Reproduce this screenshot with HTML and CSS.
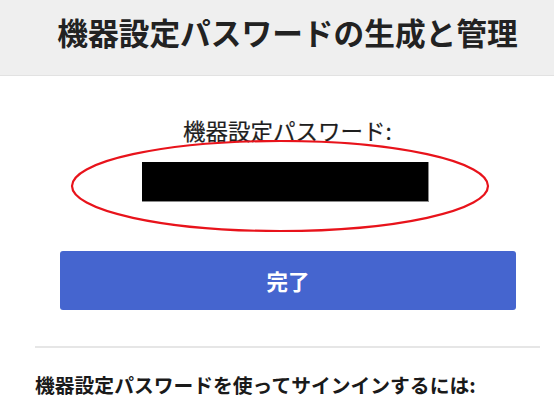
FILE: index.html
```html
<!DOCTYPE html>
<html lang="ja">
<head>
<meta charset="utf-8">
<title>機器設定パスワードの生成と管理</title>
<link rel="stylesheet" href="styles.css">
</head>
<body>
<header class="top">
  <h1 class="title">機器設定パスワードの生成と管理</h1>
</header>
<main class="content">
  <section class="result">
    <p class="label">機器設定パスワード:</p>
    <div class="secret-wrap">
      <div class="secret"></div>
      <svg class="mark" width="420" height="94" viewBox="0 0 420 94" aria-hidden="true">
        <ellipse cx="210" cy="46" rx="208" ry="45" fill="none" stroke="#e8131b" stroke-width="2.2"/>
      </svg>
    </div>
    <button class="done" type="button">完了</button>
  </section>
  <hr class="divider">
  <h2 class="howto">機器設定パスワードを使ってサインインするには:</h2>
</main>
</body>
</html>
```
FILE: styles.css
```css
* { box-sizing: border-box; }
html, body {
  margin: 0;
  padding: 0;
  background: #ffffff;
  font-family: "Noto Sans CJK JP", "Noto Sans", sans-serif;
  color: #222222;
}
.top {
  height: 76px;
  background: #efefef;
  border-bottom: 1px solid #e2e2e2;
  padding: 16px 14px 0 35px;
}
.title {
  margin: 0;
  font-size: 30.7px;
  line-height: 31px;
  font-weight: 700;
  text-align: center;
  color: #222222;
  white-space: nowrap;
}
.content {
  padding: 0 14px 0 35px;
}
.result {
  display: flex;
  flex-direction: column;
}
.label {
  margin: 43px 0 0 0;
  font-size: 22.5px;
  line-height: 23px;
  font-weight: 400;
  text-align: center;
  color: #1e1e1e;
  -webkit-text-stroke: 0.2px #1e1e1e;
}
.secret-wrap {
  position: relative;
  margin-top: 20px;
  height: 40px;
}
.secret {
  margin-left: 107px;
  width: 287px;
  height: 40px;
  background: #000000;
  border-right: 1px solid #8a8a8a;
  border-bottom: 1px solid #8a8a8a;
}
.mark {
  position: absolute;
  left: 35px;
  top: -22px;
  pointer-events: none;
}
.done {
  margin: 49px 24px 0 25px;
  height: 59px;
  border: none;
  border-radius: 3px;
  background: #4565cf;
  color: #ffffff;
  font-family: inherit;
  font-size: 21.5px;
  font-weight: 700;
  padding: 0;
}
.divider {
  margin: 36px 0 0 0;
  border: none;
  height: 2px;
  background: #e6e6e6;
}
.howto {
  margin: 27px 0 0 0;
  font-size: 19.8px;
  line-height: 20px;
  font-weight: 700;
  color: #1a1a1a;
  white-space: nowrap;
}
```
